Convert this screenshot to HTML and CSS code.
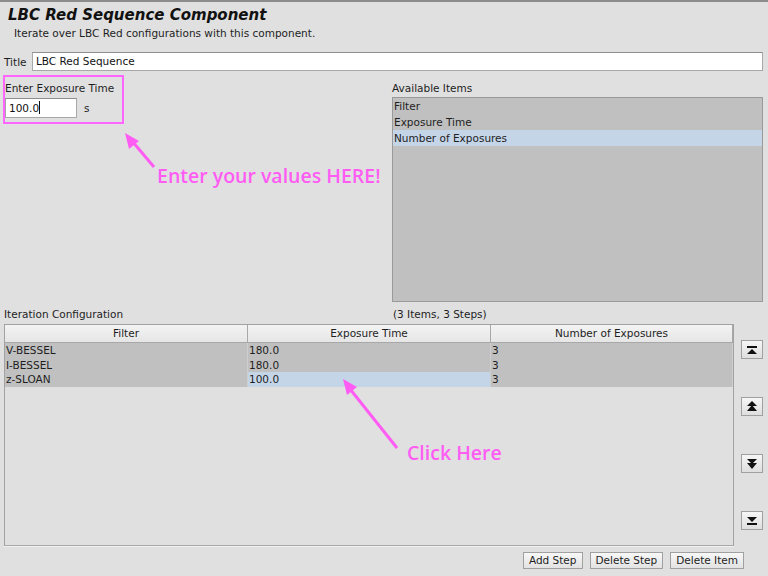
FILE: index.html
```html
<!DOCTYPE html>
<html>
<head>
<meta charset="utf-8">
<link rel="stylesheet" href="styles.css">
</head>
<body>
<div class="app">
  <header class="head">
    <h1 class="h-title">LBC Red Sequence Component</h1>
    <p class="h-sub">Iterate over LBC Red configurations with this component.</p>
  </header>

  <div class="title-row">
    <span class="lbl title-lbl">Title</span>
    <div class="field field-wide">LBC Red Sequence</div>
  </div>

  <div class="mid">
    <div class="left-col">
      <div class="hl-box">
        <div class="lbl box-lbl">Enter Exposure Time</div>
        <div class="exp-row">
          <div class="field field-small">100.0<span class="caret"></span></div>
          <span class="unit">s</span>
        </div>
      </div>
    </div>
    <div class="right-col">
      <div class="lbl col-lbl">Available Items</div>
      <div class="list">
        <div class="list-item">Filter</div>
        <div class="list-item">Exposure Time</div>
        <div class="list-item sel">Number of Exposures</div>
      </div>
    </div>
    <div class="lbl sec-lbl">Iteration Configuration</div>
    <div class="lbl sec-lbl">(3 Items, 3 Steps)</div>
  </div>

  <div class="table-area">
    <div class="table">
      <div class="th">Filter</div>
      <div class="th">Exposure Time</div>
      <div class="th last">Number of Exposures</div>

      <div class="td">V-BESSEL</div>
      <div class="td">180.0</div>
      <div class="td last">3</div>

      <div class="td">I-BESSEL</div>
      <div class="td">180.0</div>
      <div class="td last">3</div>

      <div class="td">z-SLOAN</div>
      <div class="td sel">100.0</div>
      <div class="td last">3</div>
    </div>
    <div class="movers">
      <button class="mv" title="Top">
        <svg width="12" height="10" viewBox="0 0 12 10"><rect x="1" y="1" width="10" height="2" fill="#111"/><polygon points="6,4 11,9 1,9" fill="#111"/></svg>
      </button>
      <button class="mv" title="Up">
        <svg width="12" height="11" viewBox="0 0 12 11"><polygon points="6,0 11,5 1,5" fill="#111"/><polygon points="6,4 11,10 1,10" fill="#111"/></svg>
      </button>
      <button class="mv" title="Down">
        <svg width="12" height="11" viewBox="0 0 12 11"><polygon points="1,1 11,1 6,6" fill="#111"/><polygon points="1,5 11,5 6,11" fill="#111"/></svg>
      </button>
      <button class="mv" title="Bottom">
        <svg width="12" height="10" viewBox="0 0 12 10"><polygon points="1,1 11,1 6,6" fill="#111"/><rect x="1" y="7" width="10" height="2" fill="#111"/></svg>
      </button>
    </div>
  </div>

  <div class="actions">
    <button class="btn">Add Step</button>
    <button class="btn">Delete Step</button>
    <button class="btn">Delete Item</button>
  </div>
</div>

<svg class="annot" width="768" height="576" viewBox="0 0 768 576">
  <line x1="154" y1="167" x2="132" y2="141" stroke="#ff5cf4" stroke-width="3"/>
  <polygon points="125,133 139,141 129,149" fill="#ff5cf4"/>
  <line x1="397" y1="448" x2="350" y2="389" stroke="#ff5cf4" stroke-width="3"/>
  <polygon points="343,379 357,387 347,395" fill="#ff5cf4"/>
</svg>
<div class="note note-1">Enter your values HERE!</div>
<div class="note note-2">Click Here</div>
</body>
</html>
```

FILE: styles.css
```css
* { box-sizing: border-box; }
html, body { margin: 0; padding: 0; }
body {
  width: 768px;
  height: 576px;
  overflow: hidden;
  background: #e0e0e0;
  font-family: "DejaVu Sans", "Noto Sans", sans-serif;
  font-size: 10.5px;
  color: #1e1e1e;
  position: relative;
}
.app {
  height: 576px;
  border-top: 2px solid #8c8c8c;
  display: flex;
  flex-direction: column;
}
.head { height: 50px; }
.h-title {
  margin: 3px 0 0 8px;
  font-size: 15px;
  line-height: 20px;
  font-weight: bold;
  font-style: italic;
  color: #111;
}
.h-sub {
  margin: 1px 0 0 14px;
  line-height: 14px;
}
.lbl { line-height: 14px; white-space: nowrap; }
.title-row {
  display: flex;
  align-items: center;
  padding-left: 4px;
  height: 19px;
}
.title-lbl { width: 28px; }
.field {
  background: #fff;
  border: 1px solid #a8a8a8;
  border-top-color: #8e8e8e;
  height: 19px;
  line-height: 17px;
  padding-left: 3px;
  color: #111;
}
.field-wide { width: 731px; }
.mid {
  margin-top: 4px;
  display: grid;
  grid-template-columns: 389px 371px;
  grid-template-rows: 227px 22px;
  padding-left: 3px;
}
.hl-box {
  width: 121px;
  height: 49px;
  border: 2px solid #ff66ff;
  padding: 4px 0 0 0;
}
.exp-row {
  display: flex;
  align-items: center;
  gap: 7px;
  margin-top: 3px;
}
.field-small { width: 72px; height: 20px; line-height: 18px; }
.caret {
  display: inline-block;
  width: 1px;
  height: 13px;
  background: #111;
  vertical-align: -2px;
}
.unit { line-height: 14px; }
.right-col { display: flex; flex-direction: column; }
.col-lbl { padding-top: 6px; height: 22px; }
.list {
  height: 205px;
  background: #c0c0c0;
  border: 1px solid #9a9a9a;
}
.list-item {
  height: 16px;
  line-height: 16px;
  padding-left: 1px;
}
.list-item.sel { background: #c5d5e8; }
.sec-lbl { padding-top: 5px; padding-left: 1px; }
.table-area {
  display: flex;
  align-items: flex-start;
  padding-left: 4px;
  gap: 7px;
}
.table {
  width: 730px;
  height: 222px;
  border: 1px solid #a2a2a2;
  border-bottom-color: #a8a8a8;
  display: grid;
  grid-template-columns: 243px 243px 242px;
  grid-auto-rows: 14.5px;
  grid-template-rows: 18px;
  align-content: start;
  background: #e0e0e0;
  box-shadow: 0 1px 0 #f2f2f2;
}
.th {
  height: 18px;
  line-height: 17px;
  text-align: center;
  background: linear-gradient(#f3f3f3, #e6e6e6);
  border-right: 1px solid #a8a8a8;
  border-bottom: 1px solid #a8a8a8;
}
.td {
  background: #c0c0c0;
  border-right: 1px solid #cecece;
  line-height: 14.5px;
  padding-left: 1px;
  white-space: nowrap;
}
.td.sel { background: #c5d5e8; }
.movers {
  display: flex;
  flex-direction: column;
  gap: 38px;
  padding-top: 16px;
}
.mv {
  width: 22px;
  height: 19px;
  padding: 0;
  margin: 0;
  border: 1px solid #a0a0a0;
  background: linear-gradient(#f6f6f6, #dedede);
  display: flex;
  align-items: center;
  justify-content: center;
}
.actions {
  display: flex;
  justify-content: flex-end;
  gap: 7px;
  padding-right: 24px;
  margin-top: 6px;
}
.btn {
  font-family: inherit;
  font-size: 10.5px;
  color: #1e1e1e;
  height: 17px;
  padding: 0 5px;
  margin: 0;
  border: 1px solid #a0a0a0;
  background: linear-gradient(#f8f8f8, #e2e2e2);
  line-height: 15px;
}
.annot {
  position: absolute;
  left: 0;
  top: 0;
  pointer-events: none;
}
.note {
  position: absolute;
  color: #ff5cf4;
  font-family: "Open Sans", "Noto Sans", sans-serif;
  font-weight: 600;
  font-size: 19.5px;
  line-height: 24px;
  white-space: nowrap;
}
.note-1 { left: 157px; top: 164px; }
.note-2 { left: 407px; top: 441px; }
```
